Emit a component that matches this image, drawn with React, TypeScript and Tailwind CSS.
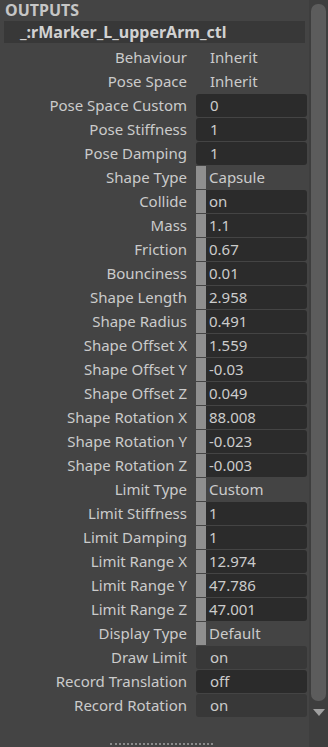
type Kind = 'plain' | 'enum' | 'field' | 'slider';

interface Attr {
  label: string;
  value: string;
  kind: Kind;
  dark?: boolean;
}

const attrs: Attr[] = [
  { label: 'Behaviour', value: 'Inherit', kind: 'plain' },
  { label: 'Pose Space', value: 'Inherit', kind: 'plain' },
  { label: 'Pose Space Custom', value: '0', kind: 'field', dark: true },
  { label: 'Pose Stiffness', value: '1', kind: 'field', dark: true },
  { label: 'Pose Damping', value: '1', kind: 'field', dark: true },
  { label: 'Shape Type', value: 'Capsule', kind: 'enum' },
  { label: 'Collide', value: 'on', kind: 'slider' },
  { label: 'Mass', value: '1.1', kind: 'slider' },
  { label: 'Friction', value: '0.67', kind: 'slider' },
  { label: 'Bounciness', value: '0.01', kind: 'slider' },
  { label: 'Shape Length', value: '2.958', kind: 'slider' },
  { label: 'Shape Radius', value: '0.491', kind: 'slider' },
  { label: 'Shape Offset X', value: '1.559', kind: 'slider' },
  { label: 'Shape Offset Y', value: '-0.03', kind: 'slider' },
  { label: 'Shape Offset Z', value: '0.049', kind: 'slider' },
  { label: 'Shape Rotation X', value: '88.008', kind: 'slider' },
  { label: 'Shape Rotation Y', value: '-0.023', kind: 'slider' },
  { label: 'Shape Rotation Z', value: '-0.003', kind: 'slider' },
  { label: 'Limit Type', value: 'Custom', kind: 'enum' },
  { label: 'Limit Stiffness', value: '1', kind: 'slider' },
  { label: 'Limit Damping', value: '1', kind: 'slider' },
  { label: 'Limit Range X', value: '12.974', kind: 'slider' },
  { label: 'Limit Range Y', value: '47.786', kind: 'slider' },
  { label: 'Limit Range Z', value: '47.001', kind: 'slider' },
  { label: 'Display Type', value: 'Default', kind: 'enum' },
  { label: 'Draw Limit', value: 'on', kind: 'field' },
  { label: 'Record Translation', value: 'off', kind: 'field', dark: true },
  { label: 'Record Rotation', value: 'on', kind: 'field' },
];

function Value({ a }: { a: Attr }) {
  if (a.kind === 'plain') {
    return <div className="pl-[14px]">{a.value}</div>;
  }
  if (a.kind === 'enum') {
    return (
      <div className="flex h-[23px] items-center">
        <div className="h-full w-[10px] bg-[#8f8f8f]" />
        <div className="pl-[3px]">{a.value}</div>
      </div>
    );
  }
  if (a.kind === 'slider') {
    return (
      <div className="flex h-[23px] items-stretch">
        <div className="w-[10px] bg-[#8f8f8f]" />
        <div className="flex flex-1 items-center rounded-r-[3px] bg-[#2b2b2b] pl-[3px]">{a.value}</div>
      </div>
    );
  }
  return (
    <div
      className={`flex h-[23px] items-center rounded-[3px] pl-[14px] ${a.dark ? 'bg-[#2b2b2b]' : 'bg-[#383838]'}`}
    >
      {a.value}
    </div>
  );
}

export default function App() {
  return (
    <div
      className="flex h-[747px] w-[328px] overflow-hidden bg-[#444444] text-[15px] text-[#cbcbcb]"
      style={{ fontFamily: '"Noto Sans", "Open Sans", sans-serif' }}
    >
      <div className="flex w-[309px] flex-col">
        <div className="pl-[5px] text-[16px] leading-[21px] font-bold text-[#c6c6c6]">OUTPUTS</div>
        <div className="mx-[4px] flex h-[22px] items-center bg-[#383838] pl-[16px] text-[16px] font-bold text-[#d2d2d2]">
          _:rMarker_L_upperArm_ctl
        </div>
        <div className="flex flex-col pt-[2px]">
          {attrs.map((a) => (
            <div key={a.label} className="flex h-6 items-center">
              <div className="w-[188px] pr-[1px] text-right">{a.label}</div>
              <div className="ml-[8px] w-[111px]">
                <Value a={a} />
              </div>
            </div>
          ))}
        </div>
        <div className="mt-auto mb-[2px] flex justify-center pl-[13px]">
          <div className="h-[1px] w-[103px] border-t-2 border-dotted border-[#8a8a8a]" />
        </div>
      </div>
      <div className="flex w-[19px] flex-col items-center bg-[#3e3e3e] pt-[4px]">
        <div className="h-[697px] w-[15px] rounded-[7px] bg-[#5c5c5c]" />
        <svg width="12" height="8" viewBox="0 0 12 8" className="mt-[8px]">
          <path d="M0 0 L12 0 L6 7 Z" fill="#a0a0a0" />
        </svg>
      </div>
    </div>
  );
}
